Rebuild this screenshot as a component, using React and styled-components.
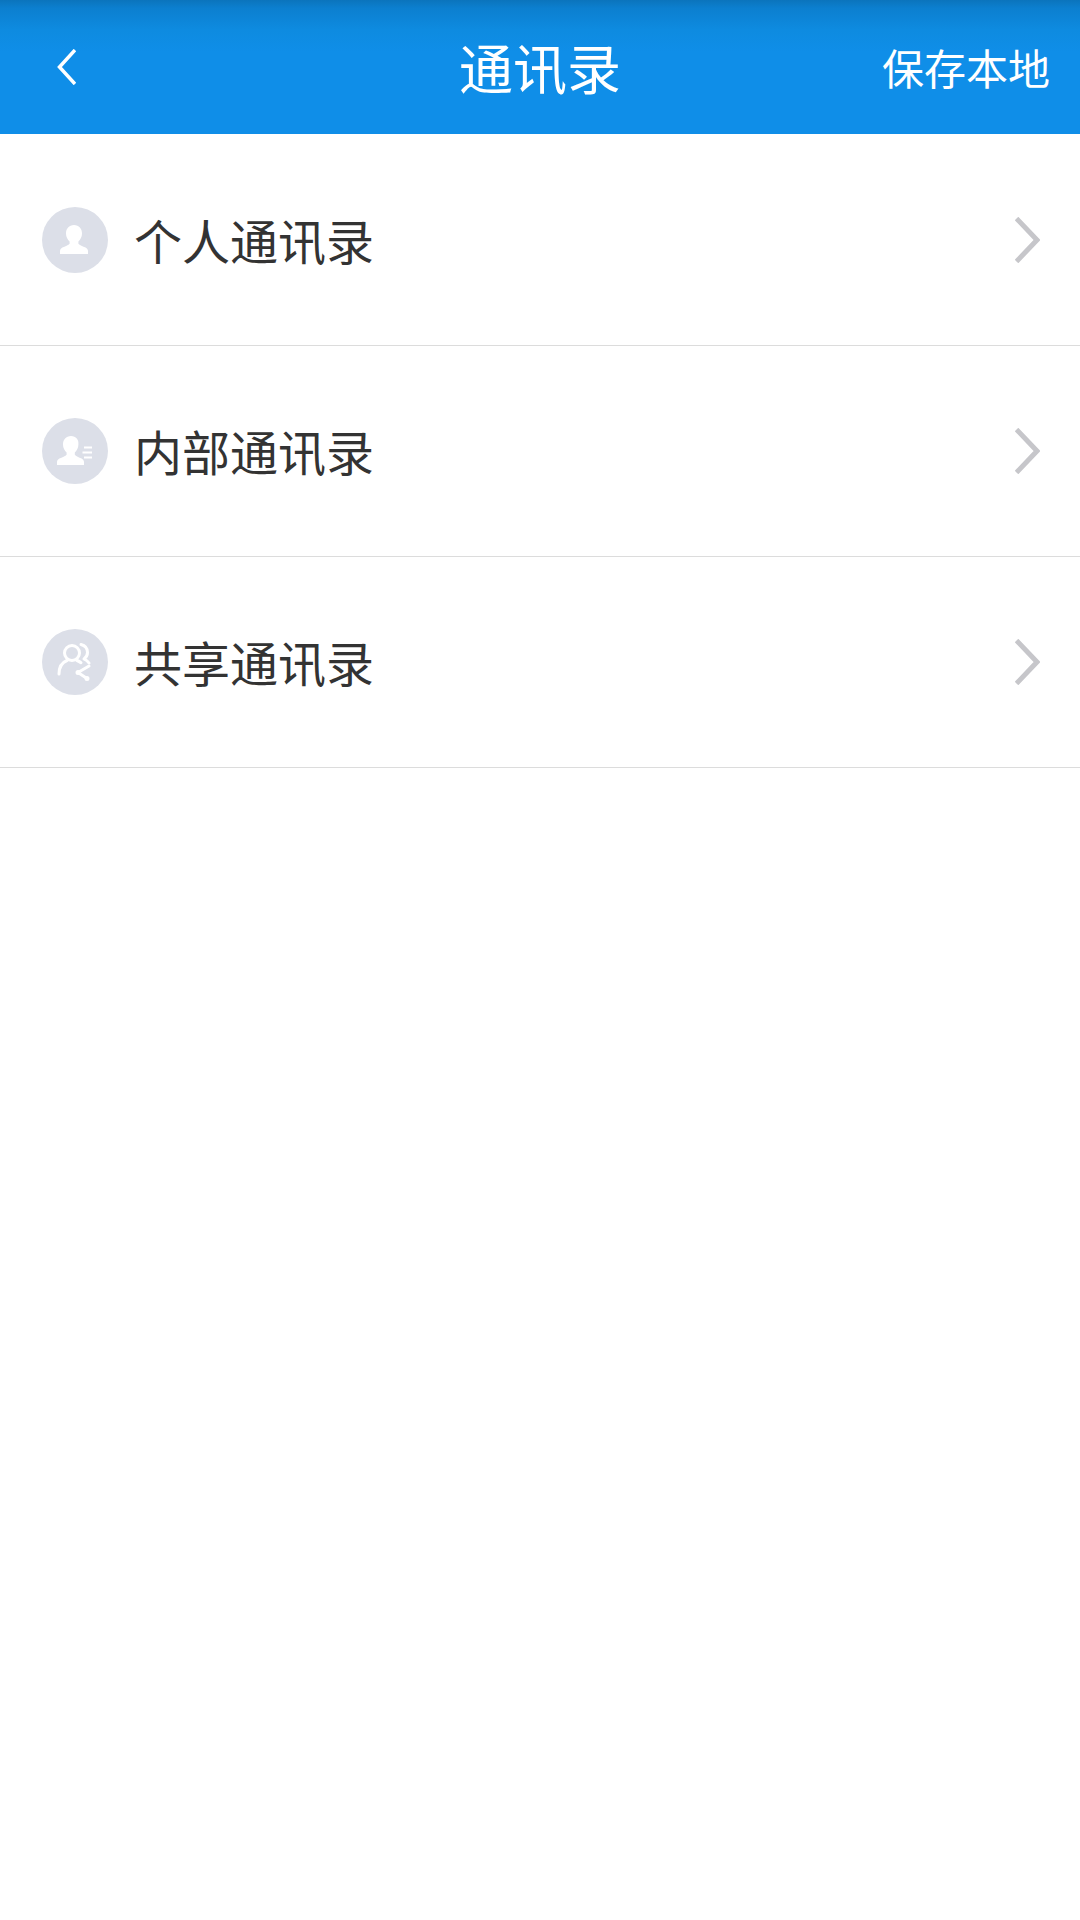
import React from 'react';
import styled, { createGlobalStyle } from 'styled-components';

const GlobalStyle = createGlobalStyle`
  html, body {
    margin: 0;
    padding: 0;
    background: #fff;
  }
  body {
    font-family: "Noto Sans CJK SC", "Liberation Sans", sans-serif;
  }
`;

const Page = styled.div`
  width: 1080px;
  height: 1920px;
  background: #fff;
  overflow: hidden;
`;

const Header = styled.header`
  height: 134px;
  display: grid;
  grid-template-columns: 1fr auto 1fr;
  align-items: center;
  background: linear-gradient(to bottom, #0b74bc 0px, #0c7fcf 8px, #0e8be0 30px, #0f8ee8 52px);
  color: #fff;
`;

const BackButton = styled.button`
  justify-self: start;
  display: flex;
  align-items: center;
  margin: 0 0 0 57px;
  padding: 0;
  border: 0;
  background: none;
  color: #fff;
`;

const Title = styled.h1`
  margin: 0;
  font-size: 54px;
  font-weight: 400;
  line-height: 1;
`;

const SaveAction = styled.span`
  justify-self: end;
  margin-right: 30px;
  font-size: 42px;
  line-height: 1;
`;

const List = styled.ul`
  margin: 0;
  padding: 1px 0 0;
  list-style: none;
`;

const Row = styled.li`
  height: 210px;
  display: flex;
  align-items: center;
  padding: 0 40px 0 42px;
  border-bottom: 1px solid #dcdcdc;
`;

const IconCircle = styled.span`
  width: 66px;
  height: 66px;
  flex: none;
  border-radius: 50%;
  background: #dcdfe8;
  color: #fff;
  display: flex;
  align-items: center;
  justify-content: center;
`;

const Label = styled.span`
  flex: 1;
  margin-left: 26px;
  padding-bottom: 3px;
  font-size: 48px;
  line-height: 1;
  color: #333;
`;

const PersonIcon = () => (
  <svg width="66" height="66" viewBox="0 0 66 66" fill="currentColor">
    <path d="M32 18c-5 0-8 3.600-8 8.400 0 3.400 1.600 6.200 3.600 8v2.400c-1 1.600-4.600 2.600-7.200 3.800-1.400.7-2.400 2-2.400 3.400v3h28v-3c0-1.400-1-2.700-2.400-3.400-2.600-1.200-6.200-2.200-7.200-3.800v-2.400c2-1.800 3.600-4.600 3.600-8C40 21.600 37 18 32 18z" />
  </svg>
);

const DirectoryIcon = () => (
  <svg width="66" height="66" viewBox="0 0 66 66" fill="currentColor">
    <path d="M29 18c-5 0-8 3.600-8 8.400 0 3.400 1.600 6.200 3.600 8v2.400c-1 1.600-4.600 2.600-7.200 3.800-1.400.7-2.400 2-2.400 3.400v3h27v-3c0-1.400-1-2.700-2.400-3.400-2.600-1.200-5.800-2.200-6.800-3.800v-2.400c2-1.800 3.600-4.600 3.600-8C37 21.600 34 18 29 18z" />
    <path d="M42 28.500h8v2h-8zM40.500 33.500h9.500v2h-9.500zM42 38.500h8v2h-8z" />
  </svg>
);

const SharedIcon = () => (
  <svg width="66" height="66" viewBox="0 0 66 66" fill="none" stroke="currentColor" strokeWidth="3" strokeLinecap="round" strokeLinejoin="round">
    <circle cx="30" cy="24" r="7.500" />
    <path d="M17 45c0-7 3-11.500 8-13.500M35 31.500c1.500.6 2.800 1.300 4 2.200" />
    <path d="M39 15.500c3.800 1 6.500 4 6.500 8 0 2.800-1.500 5-3.500 6.500 2.200 1 4 2.500 5 4" />
    <path d="M47 37l-11 6.500 9 6" />
    <circle cx="36" cy="43.500" r="1" fill="currentColor" />
    <circle cx="45" cy="49.500" r="1" fill="currentColor" />
  </svg>
);

const ChevronIcon = ({ size, color, weight, direction }) => (
  <svg
    width={size.w}
    height={size.h}
    viewBox={`0 0 ${size.w} ${size.h}`}
    fill="none"
    stroke={color}
    strokeWidth={weight}
  >
    {direction === 'left' ? (
      <path d={`M${size.w - 1} 1L2.500 ${size.h / 2}L${size.w - 1} ${size.h - 1}`} />
    ) : (
      <path d={`M1.500 1.500L${size.w - 3} ${size.h / 2}L1.500 ${size.h - 1.500}`} />
    )}
  </svg>
);

const rows = [
  { label: '个人通讯录', Icon: PersonIcon },
  { label: '内部通讯录', Icon: DirectoryIcon },
  { label: '共享通讯录', Icon: SharedIcon },
];

export default function App() {
  return (
    <Page>
      <GlobalStyle />
      <Header>
        <BackButton>
          <ChevronIcon size={{ w: 19, h: 36 }} color="#fff" weight={3.5} direction="left" />
        </BackButton>
        <Title>通讯录</Title>
        <SaveAction>保存本地</SaveAction>
      </Header>
      <List>
        {rows.map(({ label, Icon }) => (
          <Row key={label}>
            <IconCircle>
              <Icon />
            </IconCircle>
            <Label>{label}</Label>
            <ChevronIcon size={{ w: 25, h: 46 }} color="#c6c6ca" weight={5} direction="right" />
          </Row>
        ))}
      </List>
    </Page>
  );
}
